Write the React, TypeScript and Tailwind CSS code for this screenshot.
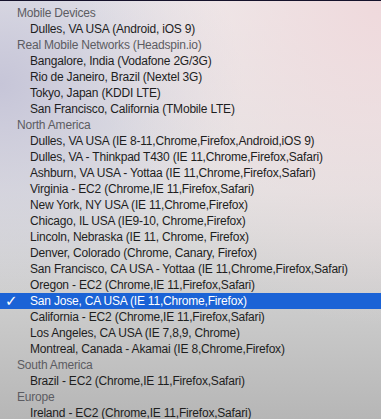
type Row = { label: string; header?: boolean; selected?: boolean };

const rows: Row[] = [
  { label: "Mobile Devices", header: true },
  { label: "Dulles, VA USA (Android, iOS 9)" },
  { label: "Real Mobile Networks (Headspin.io)", header: true },
  { label: "Bangalore, India (Vodafone 2G/3G)" },
  { label: "Rio de Janeiro, Brazil (Nextel 3G)" },
  { label: "Tokyo, Japan (KDDI LTE)" },
  { label: "San Francisco, California (TMobile LTE)" },
  { label: "North America", header: true },
  { label: "Dulles, VA USA (IE 8-11,Chrome,Firefox,Android,iOS 9)" },
  { label: "Dulles, VA - Thinkpad T430 (IE 11,Chrome,Firefox,Safari)" },
  { label: "Ashburn, VA USA - Yottaa (IE 11,Chrome,Firefox,Safari)" },
  { label: "Virginia - EC2 (Chrome,IE 11,Firefox,Safari)" },
  { label: "New York, NY USA (IE 11,Chrome,Firefox)" },
  { label: "Chicago, IL USA (IE9-10, Chrome,Firefox)" },
  { label: "Lincoln, Nebraska (IE 11, Chrome, Firefox)" },
  { label: "Denver, Colorado (Chrome, Canary, Firefox)" },
  { label: "San Francisco, CA USA - Yottaa (IE 11,Chrome,Firefox,Safari)" },
  { label: "Oregon - EC2 (Chrome,IE 11,Firefox,Safari)" },
  { label: "San Jose, CA USA (IE 11,Chrome,Firefox)", selected: true },
  { label: "California - EC2 (Chrome,IE 11,Firefox,Safari)" },
  { label: "Los Angeles, CA USA (IE 7,8,9, Chrome)" },
  { label: "Montreal, Canada - Akamai (IE 8,Chrome,Firefox)" },
  { label: "South America", header: true },
  { label: "Brazil - EC2 (Chrome,IE 11,Firefox,Safari)" },
  { label: "Europe", header: true },
  { label: "Ireland - EC2 (Chrome,IE 11,Firefox,Safari)" },
];

export default function App() {
  return (
    <div className="h-[419px] w-[381px] overflow-hidden border-t border-[#15122b] bg-[radial-gradient(ellipse_at_100%_0%,#efd9dc_0%,rgba(239,217,220,0)_55%),radial-gradient(ellipse_at_0%_20%,#c6c5d8_0%,rgba(198,197,216,0)_45%),linear-gradient(to_bottom,#efefef_0%,#e3e3e3_45%,#b6b6b6_100%)] pt-1 font-['Liberation_Sans',Arial,sans-serif] text-[12px] tracking-[-0.2px]">
      {rows.map((r) =>
        r.header ? (
          <div key={r.label} className="flex h-4 items-center pl-[17px] text-[#5c5c62]">
            {r.label}
          </div>
        ) : (
          <div
            key={r.label}
            className={
              r.selected
                ? "flex h-4 items-center bg-[#1b63d6] text-white"
                : "flex h-4 items-center text-[#1e1e1e]"
            }
          >
            <span className="w-[30px] shrink-0 pl-[5px] font-['DejaVu_Sans',sans-serif] text-[15px] font-bold leading-none">
              {r.selected ? "✓" : ""}
            </span>
            <span className="whitespace-nowrap">{r.label}</span>
          </div>
        )
      )}
    </div>
  );
}
